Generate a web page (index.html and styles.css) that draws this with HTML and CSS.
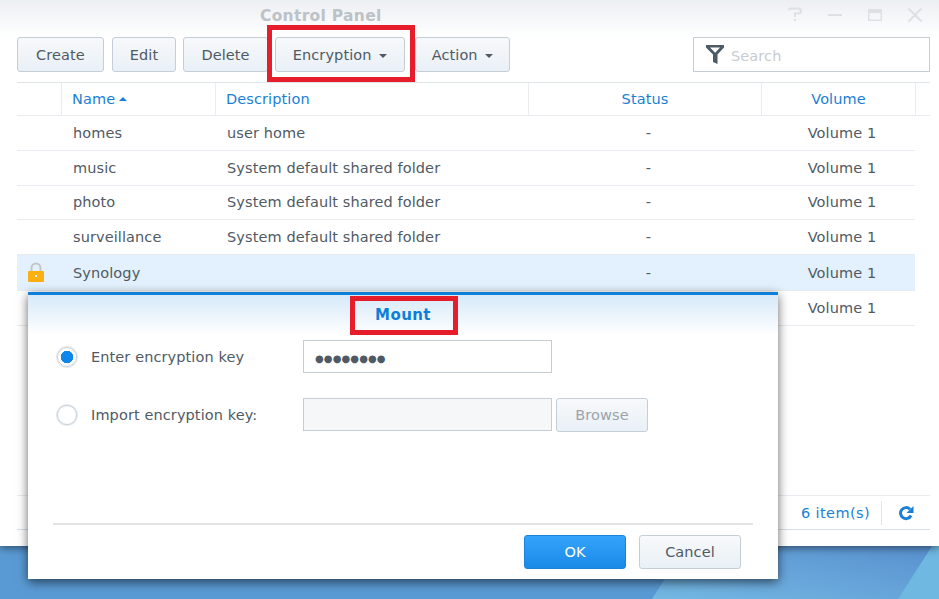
FILE: index.html
```html
<!DOCTYPE html>
<html lang="en">
<head>
    <meta charset="UTF-8">
    <meta name="viewport" content="width=device-width, initial-scale=1.0">
    <title>Control Panel</title>
    <link rel="stylesheet" href="styles.css">
</head>
<body>
    <div class="window">
        <header class="titlebar">
            <div class="title">Control Panel</div>
            <div class="win-controls">
                <svg width="16" height="16" viewBox="0 0 16 16"><path d="M2 3.500 Q2 1.500 4 1.500 H11 Q14 1.500 14 4 Q14 6.500 11 6.500 H8 V10" fill="none" stroke="#dde1e4" stroke-width="2"/><rect x="7" y="12" width="2" height="2" fill="#dde1e4"/></svg>
                <svg width="16" height="16" viewBox="0 0 16 16"><rect x="1" y="7" width="14" height="2" fill="#dde1e4"/></svg>
                <svg width="16" height="16" viewBox="0 0 16 16"><path d="M1 2 H15 V14 H1 Z M2.500 6 V12.500 H13.500 V6 Z" fill="#dde1e4" fill-rule="evenodd"/></svg>
                <svg width="16" height="16" viewBox="0 0 16 16"><path d="M1.500 1.500 L14.500 14.500 M14.500 1.500 L1.500 14.500" stroke="#dde1e4" stroke-width="2"/></svg>
            </div>
        </header>

        <div class="toolbar">
            <button class="btn btn-create">Create</button>
            <button class="btn btn-edit">Edit</button>
            <button class="btn btn-delete">Delete</button>
            <button class="btn btn-encryption">Encryption <span class="caret"></span></button>
            <button class="btn btn-action">Action <span class="caret"></span></button>
            <div class="search">
                <svg width="20" height="21" viewBox="0 0 20 21"><path d="M1 1 H19 V3.500 L12.500 10.500 V20 L8 18 V10.500 L1 3.500 Z M5 3.500 L10.200 8.800 L15 3.500 Z" fill="#4e5a64" fill-rule="evenodd"/></svg>
                <span>Search</span>
            </div>
        </div>

        <div class="grid">
            <div class="row head">
                <div class="cell c-icon"></div>
                <div class="cell c-name">Name <span class="caret-up"></span></div>
                <div class="cell c-desc">Description</div>
                <div class="cell c-status">Status</div>
                <div class="cell c-volume">Volume</div>
            </div>
            <div class="row">
                <div class="cell c-icon"></div>
                <div class="cell c-name">homes</div>
                <div class="cell c-desc">user home</div>
                <div class="cell c-status">-</div>
                <div class="cell c-volume">Volume 1</div>
            </div>
            <div class="row">
                <div class="cell c-icon"></div>
                <div class="cell c-name">music</div>
                <div class="cell c-desc">System default shared folder</div>
                <div class="cell c-status">-</div>
                <div class="cell c-volume">Volume 1</div>
            </div>
            <div class="row">
                <div class="cell c-icon"></div>
                <div class="cell c-name">photo</div>
                <div class="cell c-desc">System default shared folder</div>
                <div class="cell c-status">-</div>
                <div class="cell c-volume">Volume 1</div>
            </div>
            <div class="row">
                <div class="cell c-icon"></div>
                <div class="cell c-name">surveillance</div>
                <div class="cell c-desc">System default shared folder</div>
                <div class="cell c-status">-</div>
                <div class="cell c-volume">Volume 1</div>
            </div>
            <div class="row selected">
                <div class="cell c-icon">
                    <svg width="18" height="21" viewBox="0 0 18 21"><path d="M4.500 10 V6 A4.500 4.500 0 0 1 13.500 6 V10" fill="none" stroke="#c3c6c9" stroke-width="2"/><rect x="1" y="9" width="16" height="11" rx="1" fill="#fbb012"/><rect x="8" y="13" width="2" height="2" fill="#fff"/></svg>
                </div>
                <div class="cell c-name">Synology</div>
                <div class="cell c-desc"></div>
                <div class="cell c-status">-</div>
                <div class="cell c-volume">Volume 1</div>
            </div>
            <div class="row">
                <div class="cell c-icon"></div>
                <div class="cell c-name"></div>
                <div class="cell c-desc"></div>
                <div class="cell c-status">-</div>
                <div class="cell c-volume">Volume 1</div>
            </div>
        </div>

        <footer class="statusbar">
            <span class="count">6 item(s)</span>
            <span class="refresh">
                <svg width="16" height="16" viewBox="0 0 16 16"><path d="M13 10.500 A5.500 5.500 0 1 1 12 4.300" fill="none" stroke="#1b7fd4" stroke-width="3"/><path d="M15.500 1 V8 H8.500 Z" fill="#1b7fd4"/></svg>
            </span>
        </footer>

        <!-- mount dialog sits over the list -->
        <div class="dialog">
            <div class="dialog-title">Mount</div>
            <div class="dialog-body">
                <div class="form-row">
                    <span class="radio checked"></span>
                    <label>Enter encryption key</label>
                    <div class="field dots">&#9679;&#9679;&#9679;&#9679;&#9679;&#9679;&#9679;&#9679;</div>
                </div>
                <div class="form-row">
                    <span class="radio"></span>
                    <label>Import encryption key:</label>
                    <div class="field disabled"></div>
                    <button class="btn btn-browse">Browse</button>
                </div>
            </div>
            <div class="dialog-footer">
                <button class="btn btn-ok">OK</button>
                <button class="btn btn-cancel">Cancel</button>
            </div>
        </div>

        <div class="mark mark-encryption"></div>
        <div class="mark mark-mount"></div>
    </div>

    <div class="desktop">
        <svg width="939" height="53" viewBox="0 0 939 53">
            <defs>
                <linearGradient id="band" x1="0" y1="1" x2="1" y2="0">
                    <stop offset="0" stop-color="#74b8e3"/>
                    <stop offset="1" stop-color="#5890cf"/>
                </linearGradient>
            </defs>
            <rect width="939" height="53" fill="#5a9ad4"/>
            <polygon points="686,0 932,0 898,53 652,53" fill="url(#band)"/>
            <polygon points="932,0 939,0 939,53 898,53" fill="#6fb8e2"/>
        </svg>
    </div>
</body>
</html>
```

FILE: styles.css
```css
html, body {
    height: 100%;
}

body {
    margin: 0;
    display: flex;
    flex-direction: column;
    overflow: hidden;
    font-family: "DejaVu Sans", sans-serif;
    font-size: 14.500px;
    letter-spacing: 0.100px;
    color: #505a64;
}

.window {
    position: relative;
    height: 546px;
    background-color: #fff;
    box-shadow: 0 2px 8px rgba(0, 0, 0, 0.5);
    z-index: 1;
}

.titlebar {
    display: flex;
    align-items: center;
    height: 37px;
    padding-bottom: 7px;
    box-sizing: border-box;
    padding-left: 260px;
    padding-right: 16px;
    background: linear-gradient(#eceff2, #fff);
}

.title {
    flex: 1;
    font-weight: bold;
    font-size: 15.500px;
    letter-spacing: 0.300px;
    color: #bcc2c7;
    position: relative;
    top: 1px;
}

.win-controls {
    display: flex;
    gap: 24px;
}

/* toolbar */
.toolbar {
    display: flex;
    align-items: center;
    height: 35px;
    padding: 0 9px 0 17px;
}

.btn {
    height: 35px;
    box-sizing: border-box;
    border: 1px solid #c5ced6;
    border-radius: 3px;
    background: linear-gradient(#f7f9fb, #e9f0f6);
    font-family: inherit;
    font-size: inherit;
    letter-spacing: inherit;
    color: #505a64;
    padding: 0;
}

.btn-create { width: 87px; margin-right: 8px; }
.btn-edit { width: 64px; margin-right: 7px; }
.btn-delete { width: 85px; margin-right: 7px; }
.btn-encryption { width: 130px; margin-right: 10px; }
.btn-action { width: 95px; }

.caret {
    display: inline-block;
    margin-left: 3px;
    vertical-align: middle;
    border-left: 4px solid transparent;
    border-right: 4px solid transparent;
    border-top: 4px solid #505a64;
}

.search {
    display: flex;
    align-items: center;
    gap: 6px;
    margin-left: auto;
    width: 237px;
    height: 35px;
    box-sizing: border-box;
    padding-left: 11px;
    border: 1px solid #c5ced6;
    color: #c8ccd0;
}

.search span {
    position: relative;
    top: 1px;
}

/* table */
.grid {
    margin: 10px 9px 0 17px;
    border-top: 1px solid #dfe5ea;
}

.row {
    display: flex;
    height: 34.800px;
    margin-right: 15px;
    box-sizing: border-box;
    border-bottom: 1px solid #e8ecf0;
}

.row.head {
    height: 33px;
    margin-right: 0;
    color: #1b7fd4;
}

.row.selected {
    height: 36px;
    background-color: #e2f1fd;
}

.cell {
    display: flex;
    align-items: center;
    box-sizing: border-box;
    padding-left: 12px;
}

.c-icon { width: 44px; padding-left: 10px; }
.c-name { width: 154px; }
.c-desc { width: 313px; }
.c-status { width: 233px; padding-left: 8px; justify-content: center; }
.c-volume { width: 154px; padding-left: 8px; justify-content: center; }

.head .cell { border-right: 1px solid #e8ecf0; }
.head .c-icon { width: 45px; }
.head .c-name { width: 154px; padding-left: 10px; }
.head .c-desc { padding-left: 10px; }
.head .c-status, .head .c-volume { padding-left: 0; }

.caret-up {
    display: inline-block;
    margin-left: 4px;
    border-left: 4px solid transparent;
    border-right: 4px solid transparent;
    border-bottom: 4px solid #1b7fd4;
}

/* bottom bar */
.statusbar {
    position: absolute;
    left: 17px;
    right: 9px;
    top: 495px;
    height: 35px;
    box-sizing: border-box;
    display: flex;
    align-items: center;
    justify-content: flex-end;
    border-top: 1px solid #e8ecf0;
    border-bottom: 1px solid #d5dfe8;
    color: #1b7fd4;
}

.count {
    padding-right: 11px;
    letter-spacing: 0.400px;
}

.refresh {
    display: flex;
    align-items: center;
    height: 24px;
    padding: 0 16px;
    border-left: 1px solid #e0e5ea;
}

/* dialog */
.dialog {
    position: absolute;
    left: 28px;
    top: 292px;
    width: 750px;
    height: 287px;
    box-sizing: border-box;
    display: flex;
    flex-direction: column;
    border-top: 3px solid #0e7fd9;
    background-color: #fff;
    box-shadow: 0 3px 10px rgba(0, 0, 0, 0.6);
}

.dialog-title {
    height: 40px;
    padding-top: 11px;
    box-sizing: border-box;
    text-align: center;
    font-weight: bold;
    font-size: 15px;
    letter-spacing: 0.400px;
    color: #0e7fd9;
    background: linear-gradient(#d6e9f8, #fff);
}

.dialog-body {
    flex: 1;
    padding: 5px 0 0 29px;
}

.form-row {
    display: flex;
    align-items: center;
    height: 33px;
    margin-bottom: 25px;
}

.form-row label {
    width: 212px;
    margin-left: 14px;
}

.radio {
    width: 20px;
    height: 20px;
    box-sizing: border-box;
    border: 1px solid #c9d1d8;
    border-radius: 50%;
    background-color: #fff;
    box-shadow: 0 0 0 1px #e6eaee;
}

.radio.checked {
    background: radial-gradient(circle, #0e86ec 6px, #fff 6.500px);
}

.field {
    width: 249px;
    height: 33px;
    box-sizing: border-box;
    border: 1px solid #c5ced6;
    padding-left: 11px;
    line-height: 35px;
}

.field.dots {
    font-size: 10px;
    letter-spacing: 0.100px;
    color: #505a64;
}

.field.disabled {
    background-color: #f5f7f9;
}

.btn-browse {
    width: 92px;
    height: 34px;
    margin-left: 4px;
    color: #9aa3ab;
}

.dialog-footer {
    display: flex;
    justify-content: flex-end;
    gap: 13px;
    height: 56px;
    margin: 0 25px;
    padding: 10px 12px 0 0;
    box-sizing: border-box;
    border-top: 2px solid #e4e4e4;
}

.dialog-footer .btn {
    width: 102px;
    height: 34px;
}

.btn-ok {
    border-color: #1a84dc !important;
    background: linear-gradient(#33a3fb, #1a8ae8);
    color: #fff;
}

/* red annotation boxes */
.mark {
    position: absolute;
    box-sizing: border-box;
    border: 5px solid #e61e2c;
}

.mark-encryption {
    left: 267px;
    top: 25px;
    width: 148px;
    height: 57px;
}

.mark-mount {
    left: 350px;
    top: 296px;
    width: 108px;
    height: 39px;
}

/* wallpaper strip under the window */
.desktop {
    flex: 1;
    overflow: hidden;
}

.desktop svg {
    display: block;
}
```
